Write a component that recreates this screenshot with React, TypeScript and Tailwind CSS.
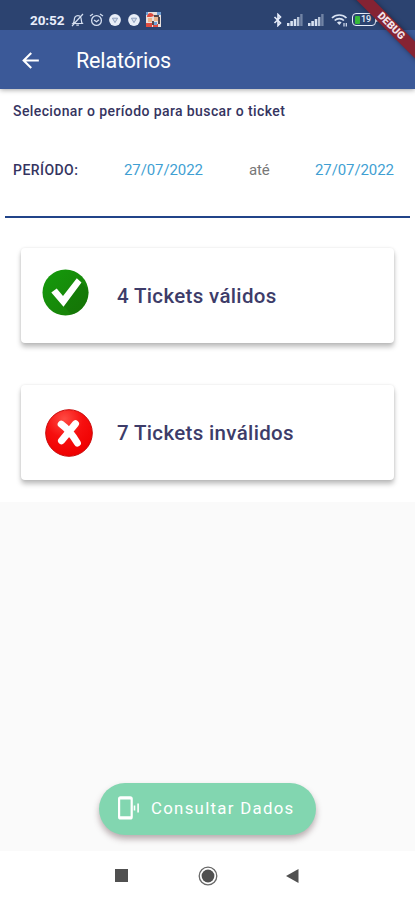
import type { ReactNode } from "react"

export default function App() {
  return (
    <div className="relative flex h-[900px] w-[415px] flex-col overflow-hidden bg-[#fafafa] font-[Roboto,sans-serif]">
      <header className="relative z-10 bg-[#3b5998] shadow-[0_1px_5px_rgba(0,0,0,0.35)]">
        <StatusBar />
        <div className="flex h-[59px] items-center pt-[2px] pl-[18px]">
          <svg className="h-[25px] w-[25px]" viewBox="0 0 24 24" fill="#fff">
            <path d="M20 11H7.83l5.59-5.59L12 4l-8 8 8 8 1.41-1.41L7.83 13H20v-2z" />
          </svg>
          <h1 className="ml-[33px] text-[21.5px] leading-none font-normal tracking-[-0.15px] text-white">Relatórios</h1>
        </div>
      </header>

      <main className="h-[413px] shrink-0 bg-white">
        <p className="ml-[13px] pt-[14px] text-[14px] leading-4 font-medium tracking-[0.4px] text-[#35345f]">
          Selecionar o período para buscar o ticket
        </p>
        <div className="mt-[43px] flex h-4 items-center pl-[13px] text-[15px] leading-4 tracking-[-0.1px]">
          <span className="w-[111px] text-[14px] font-medium tracking-[0.45px] text-[#35345f]">PERÍODO:</span>
          <span className="w-[125px] text-[#3f9fd3]">27/07/2022</span>
          <span className="w-[66px] text-[#777]">até</span>
          <span className="text-[#3f9fd3]">27/07/2022</span>
        </div>
        <hr className="mx-[5px] mt-[38px] border-0 border-t-2 border-[#214489]" />
        <div className="flex flex-col gap-[42px] px-[21px] pt-[30px]">
          <TicketCard label="4 Tickets válidos">
            <ValidIcon />
          </TicketCard>
          <TicketCard label="7 Tickets inválidos">
            <InvalidIcon />
          </TicketCard>
        </div>
      </main>

      <div className="flex grow items-end justify-center pb-4">
        <button className="flex h-[52px] w-[217px] items-center rounded-full bg-[#82d6b0] pl-[17px] text-white shadow-[0_4px_6px_rgba(70,40,45,0.36)]">
          <svg className="mb-[2px] h-[26px] w-[25px]" viewBox="0 0 25 26" fill="none" stroke="#fff">
            <rect x="3.1" y="2.3" width="12.6" height="21.2" rx="1.5" strokeWidth="2.2" />
            <path d="M3 3.2h12.5M3 22.5h12.5" strokeWidth="2.5" />
            <path d="M18.5 10.5v5M22.1 8.5v9" strokeWidth="1.6" />
          </svg>
          <span className="mb-[2px] ml-[10px] text-[16.8px] leading-5 tracking-[1.3px]">Consultar Dados</span>
        </button>
      </div>

      <NavigationBar />
      <DebugRibbon />
    </div>
  )
}

function StatusBar() {
  return (
    <div className="flex h-[30px] items-center bg-[#2c4370] pt-[9px] pl-[30px] text-[#e8eefb]">
      <span className="w-[41px] text-[13.5px] leading-4 font-bold tracking-[-0.1px]">20:52</span>
      <svg className="h-[14px] w-[13px]" viewBox="0 0 13 14" fill="none" stroke="#d5dff0" strokeWidth="1.2">
        <path d="M2 10.5c1.7-1.5.8-4.5 2-6.3 1.4-2 4.6-2 5.7 0 1 1.8.2 4.8 1.6 6.3zM5.3 12.2h2.6M12 1 1 13" />
      </svg>
      <svg className="ml-[5px] h-[14px] w-[15px]" viewBox="0 0 15 14" fill="none" stroke="#d5dff0" strokeWidth="1.3">
        <circle cx="7.5" cy="7.5" r="4.9" />
        <path d="m1 3 3-2M14 3l-3-2M5 7l2.5 1.8L10 6.8" />
      </svg>
      <ChromeIcon className="ml-[5px]" />
      <ChromeIcon className="ml-[7px]" />
      <svg className="ml-[6px] h-[15px] w-[15px]" viewBox="0 0 15 15">
        <path fill="#e9e0dc" d="M0 0h15v15H0z" />
        <path fill="#df4d40" d="M1 5c0-5 6-5 7-1l-3 1zM0 11h6v4H0zM7 12h5v3H7z" />
        <path fill="#efb58c" d="M2 6h4v4H2zM8 5h4v4H8z" />
        <path fill="#55484c" d="M8 3h5v2H8zM6 9h2v4H6zM12 5h2v7h-2z" />
        <path fill="#70a0d5" d="M11 0h4v3h-4zM0 0h2v3H0zM8 10h3v3H8z" />
      </svg>
      <svg className="ml-[112px] h-[14px] w-[10px]" viewBox="0 0 10 14" fill="none" stroke="#e8eefb" strokeWidth="1.6">
        <path d="m1.5 4 6 6L5 12.5v-11L7.5 4l-6 6" />
      </svg>
      <SignalIcon className="ml-[4px]" />
      <SignalIcon className="ml-[5px]" />
      <svg className="ml-[7px] h-[14px] w-[17px]" viewBox="0 0 17 14" fill="none" stroke="#d9e3f3" strokeWidth="1.7">
        <path d="M1 5c4-4 10.5-4 14.5 0M3.7 7.5c2.5-2.5 6.7-2.5 9.2 0" />
        <path d="M6 9.5c1.3-1.3 3.3-1.3 4.6 0L8.3 12z" fill="#d9e3f3" stroke="none" />
        <path d="M13 10v3.5M15.3 10v3.5" strokeWidth="1.2" />
      </svg>
      <div className="ml-[4px] flex h-[13px] w-[24px] items-center rounded-[4px] border-[1.5px] border-[#e8eefb] pl-[2px]">
        <span className="h-[8px] w-[5px] rounded-[1px] bg-[#36b83a]" />
        <span className="ml-[1px] text-[9px] leading-none font-medium">19</span>
      </div>
      <span className="h-[5px] w-[2px] rounded-r-sm bg-[#e8eefb]" />
    </div>
  )
}

function ChromeIcon({ className }: { className: string }) {
  return (
    <svg className={`h-[12px] w-[12px] ${className}`} viewBox="0 0 12 12">
      <circle cx="6" cy="6" r="5.9" fill="#e8eef8" />
      <path d="M3.4 4.2h5.2L6 8.6z" fill="#d5deeb" stroke="#8798b8" strokeWidth=".9" strokeLinejoin="round" />
    </svg>
  )
}

function SignalIcon({ className }: { className: string }) {
  return (
    <svg className={`h-[12px] w-[16px] ${className}`} viewBox="0 0 16 12" fill="#d9e3f3">
      <path d="M0 9h2.5v3H0zM3.3 7h2.6v5H3.3zM6.7 5h2.6v7H6.7z" />
      <path d="M10 3h2.4v9H10z" fillOpacity=".8" />
      <path d="M13.2 0h2.4v12h-2.4z" fillOpacity=".4" />
    </svg>
  )
}

function TicketCard({ label, children }: { label: string; children: ReactNode }) {
  return (
    <section className="flex h-[95px] items-center rounded-[4px] bg-white pl-[21px] shadow-[0_4px_5px_rgba(0,0,0,0.25),0_0_3px_rgba(0,0,0,0.1)]">
      <div className="w-[75px]">{children}</div>
      <h2 className="pt-px text-[20.5px] leading-6 font-medium tracking-[0.34px] text-[#3d3c69]">{label}</h2>
    </section>
  )
}

function ValidIcon() {
  return (
    <svg className="mb-[6px] h-[47px] w-[47px]" viewBox="0 0 47 47">
      <defs>
        <linearGradient id="valid" x1="0" y1="0" x2="1" y2="1">
          <stop offset="0" stopColor="#149b0c" />
          <stop offset="1" stopColor="#197c08" />
        </linearGradient>
        <clipPath id="disc">
          <circle cx="23.5" cy="23.5" r="23" />
        </clipPath>
      </defs>
      <circle cx="23.5" cy="23.5" r="23" fill="url(#valid)" />
      <path d="m39 13 16 16-18 26-15-18z" fill="#126906" fillOpacity=".4" clipPath="url(#disc)" />
      <path d="m9.3 23.6 5.4-4 6.3 7.4L34.8 9.200l4.700 4.200-18 24.400z" fill="#fff" />
    </svg>
  )
}

function InvalidIcon() {
  return (
    <svg className="ml-[3px] h-[48px] w-[48px]" viewBox="0 0 48 48">
      <defs>
        <radialGradient id="invalid" cx=".4" cy=".2" r=".8">
          <stop offset="0" stopColor="#ff4b43" />
          <stop offset=".5" stopColor="#f60f0f" />
          <stop offset="1" stopColor="#ef0000" />
        </radialGradient>
      </defs>
      <circle cx="24" cy="24" r="23.3" fill="url(#invalid)" stroke="#c90909" />
      <path d="M16.2 15.2c5.500 4 11.500 11 16.200 18.800M30.500 14.800c-4 5-9 11-14 17" fill="none" stroke="#fff" strokeWidth="7" strokeLinecap="round" />
    </svg>
  )
}

function NavigationBar() {
  return (
    <nav className="flex h-[49px] shrink-0 items-center bg-white pl-[115px]">
      <span className="h-[13px] w-[13px] bg-[#505050]" />
      <svg className="ml-[70px] h-[20px] w-[20px]" viewBox="0 0 20 20">
        <circle cx="10" cy="10" r="8.8" fill="none" stroke="#686868" strokeWidth="1.3" />
        <circle cx="10" cy="10" r="6.4" fill="#505050" />
      </svg>
      <svg className="ml-[68px] h-[14px] w-[13px]" viewBox="0 0 13 14" fill="#505050">
        <path d="M12.5 0v14L0 7z" />
      </svg>
    </nav>
  )
}

function DebugRibbon() {
  return (
    <div className="absolute top-[20px] right-[-36px] z-20 flex h-[12px] w-[120px] rotate-45 items-center justify-center bg-[#852333] text-[10.5px] leading-none font-black text-[#f3e4e9] shadow-[0_0_5px_rgba(0,0,0,0.4)]">
      DEBUG
    </div>
  )
}
